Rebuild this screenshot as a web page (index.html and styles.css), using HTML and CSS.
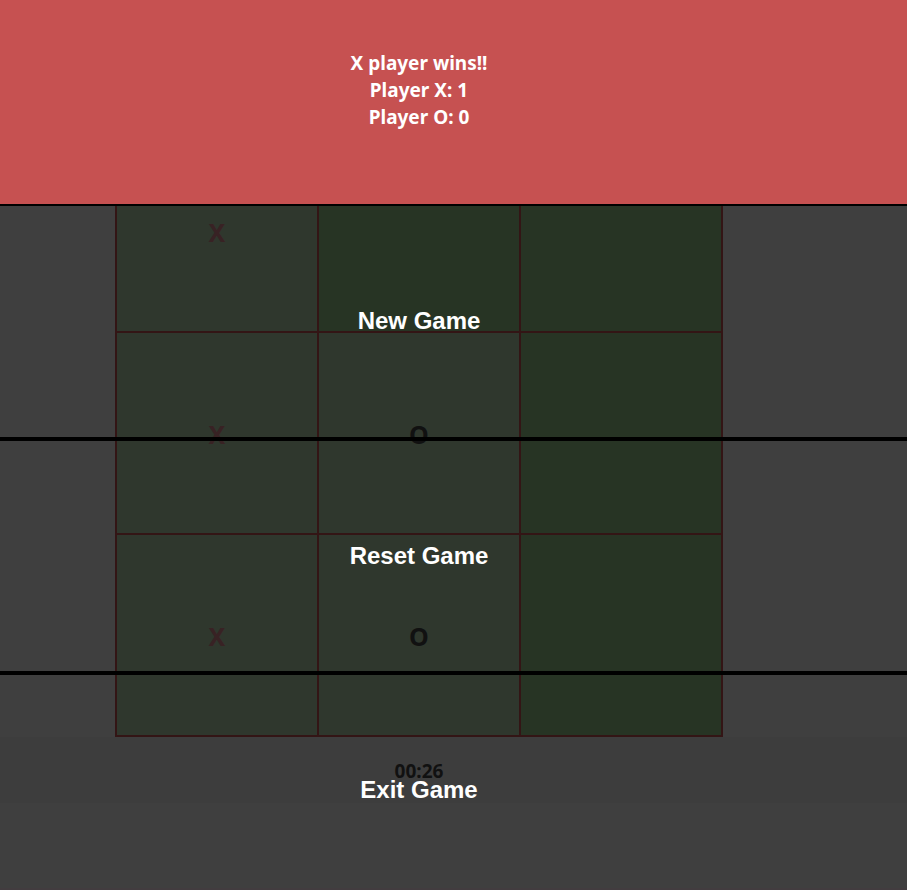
FILE: index.html
```html
<!DOCTYPE html>
<html lang="en">
<head>
<meta charset="utf-8">
<title>Tic Tac Toe</title>
<link rel="stylesheet" href="styles.css">
</head>
<body>
<main class="game">
  <div class="board">
    <div class="cell played x">X</div>
    <div class="cell"></div>
    <div class="cell"></div>
    <div class="cell played x">X</div>
    <div class="cell played">O</div>
    <div class="cell"></div>
    <div class="cell played x">X</div>
    <div class="cell played">O</div>
    <div class="cell"></div>
  </div>
  <div class="timer">00:26</div>
</main>
<section class="result">
  <header class="banner">
    <div>X player wins!!</div>
    <div>Player X: 1</div>
    <div>Player O: 0</div>
  </header>
  <button class="action" type="button">New Game</button>
  <button class="action" type="button">Reset Game</button>
  <button class="action" type="button">Exit Game</button>
</section>
</body>
</html>
```
FILE: styles.css
```css
* {
  box-sizing: border-box;
}

html,
body {
  height: 100%;
}

body {
  position: relative;
  margin: 0;
  overflow: hidden;
  background: #3f3f3f;
  font-family: "Segoe UI", "Noto Sans", "Open Sans", sans-serif;
  font-weight: 700;
}

.game {
  min-height: 100%;
  padding-top: 129px;
  border-bottom: 2px solid #423c3f;
}

.board {
  display: grid;
  grid-template-columns: repeat(3, 202px);
  grid-auto-rows: 202px;
  justify-content: center;
  padding: 2px 69px 0 2px;
}

.cell {
  display: flex;
  align-items: center;
  justify-content: center;
  margin: -2px 0 0 -2px;
  padding-top: 2px;
  border: 2px solid #331515;
  background: #273424;
  color: #111111;
  font-size: 25px;
}

.played {
  background: #2f372d;
}

.x {
  color: #382224;
}

.timer {
  height: 66px;
  padding-right: 69px;
  background: #3d3d3d;
  color: #111111;
  font-size: 19px;
  line-height: 68px;
  text-align: center;
}

.result {
  position: absolute;
  top: 0;
  left: 0;
  display: flex;
  flex-direction: column;
  width: 100%;
  height: 102vh;
}

.banner {
  height: 204px;
  padding: 50px 69px 0 0;
  background: #c65151;
  color: #ffffff;
  font-size: 19px;
  line-height: 27px;
  text-align: center;
}

.action {
  flex: 1;
  padding: 0 69px 0 0;
  border: 2px solid #000000;
  border-width: 2px 0;
  background: transparent;
  color: #ffffff;
  font: 700 24px "Liberation Sans", Arial, sans-serif;
  cursor: pointer;
}
```
